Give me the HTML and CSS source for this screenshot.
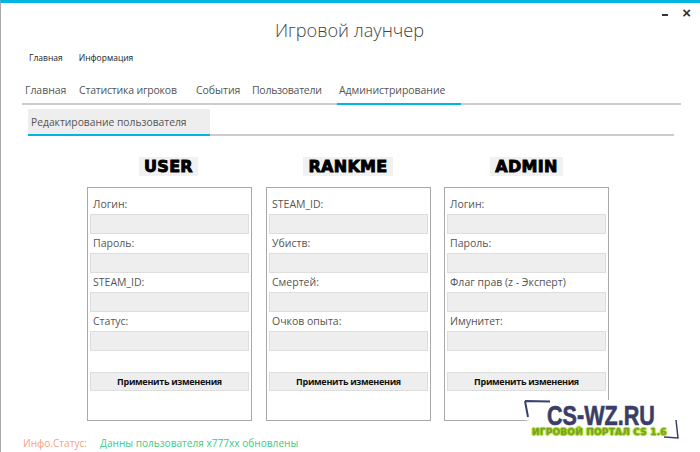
FILE: index.html
```html
<!DOCTYPE html>
<html lang="ru">
<head>
<meta charset="utf-8">
<title>Игровой лаунчер</title>
<link rel="stylesheet" href="styles.css">
</head>
<body>
<div class="window">
  <div class="winctl"><span class="min"></span><span class="close">×</span></div>
  <h1 class="title">Игровой лаунчер</h1>
  <nav class="menu"><span>Главная</span><span>Информация</span></nav>
  <div class="tabs">
    <span class="tab t1">Главная</span>
    <span class="tab t2">Статистика игроков</span>
    <span class="tab t3">События</span>
    <span class="tab t4">Пользователи</span>
    <span class="tab t5 active">Администрирование</span>
  </div>
  <div class="subtabs"><span class="subtab">Редактирование пользователя</span></div>
  <main class="cols">
    <section class="col c1">
      <h2 class="head"><span>USER</span></h2>
      <div class="panel">
        <label>Логин:</label><div class="field"></div>
        <label>Пароль:</label><div class="field"></div>
        <label>STEAM_ID:</label><div class="field"></div>
        <label>Статус:</label><div class="field"></div>
        <div class="btn">Применить изменения</div>
      </div>
    </section>
    <section class="col c2">
      <h2 class="head"><span>RANKME</span></h2>
      <div class="panel">
        <label>STEAM_ID:</label><div class="field"></div>
        <label>Убиств:</label><div class="field"></div>
        <label>Смертей:</label><div class="field"></div>
        <label>Очков опыта:</label><div class="field"></div>
        <div class="btn">Применить изменения</div>
      </div>
    </section>
    <section class="col c3">
      <h2 class="head"><span>ADMIN</span></h2>
      <div class="panel">
        <label>Логин:</label><div class="field"></div>
        <label>Пароль:</label><div class="field"></div>
        <label>Флаг прав (z - Эксперт)</label><div class="field"></div>
        <label>Имунитет:</label><div class="field"></div>
        <div class="btn">Применить изменения</div>
      </div>
    </section>
  </main>
  <footer class="status"><span class="s1">Инфо.Статус:</span><span class="s2">Данны пользователя x777xx обновлены</span></footer>
  <div class="mark">
    <svg class="frame" width="158" height="42" viewBox="0 0 158 42"><path d="M1 1 L26 1.5 M1 1 L4 17" stroke="#3b3f6b" stroke-width="2" fill="none"/><path d="M152 20 L154 38 L140 37" stroke="#3b3f6b" stroke-width="1.5" fill="none"/></svg>
    <div class="big">CS-WZ.RU</div>
    <div class="small">ИГРОВОЙ ПОРТАЛ CS 1.6</div>
  </div>
</div>
</body>
</html>
```
FILE: styles.css
```css
* { box-sizing: border-box; }
html, body { margin: 0; padding: 0; background: #fff; }
.window {
  position: relative;
  width: 700px;
  height: 452px;
  overflow: hidden;
  border-top: 3px solid #00b5e2;
  border-left: 1px solid #a8a8a8;
  font-family: "Open Sans", "Noto Sans", sans-serif;
  color: #555;
}
.winctl { position: absolute; top: 0; right: 0; }
.winctl .min { position: absolute; top: 11px; right: 32px; width: 6px; height: 2px; background: #333; }
.winctl .close { position: absolute; top: 0; right: 9px; font: 700 15px/20px "Liberation Sans", sans-serif; color: #333; }
.title {
  margin: 0;
  padding-top: 14px;
  padding-right: 2px;
  height: 45px;
  text-align: center;
  font-size: 18.2px;
  line-height: 27px;
  font-weight: 300;
  color: #444;
}
.menu { display: flex; gap: 16px; padding-left: 28px; height: 35px; padding-top: 4px; font-size: 8.5px; line-height: 12px; color: #222; }
.tabs {
  display: flex;
  margin-left: 21px;
  width: 659px;
  height: 22px;
  border-bottom: 2px solid #ccc;
  font-size: 10.5px;
  line-height: 15px;
  letter-spacing: -.05px;
}
.tab { height: 22px; white-space: nowrap; }
.t1 { width: 54px; padding-left: 3px; }
.t2 { width: 120px; padding-left: 3px; letter-spacing: -.2px; }
.t3 { width: 56px; }
.t4 { width: 85px; letter-spacing: -.28px; }
.t5 { width: 124px; padding-left: 2px; }
.tab.active { border-bottom: 2px solid #00b5e2; }
.subtabs {
  margin: 4px 0 0 27px;
  width: 646px;
  height: 27px;
  border-bottom: 2px solid #ccc;
  display: flex;
}
.subtab {
  width: 182px;
  height: 27px;
  background: #eee;
  border-bottom: 2px solid #00b5e2;
  padding-left: 3px;
  font-size: 10.3px;
  line-height: 27px;
  white-space: nowrap;
}
.cols { display: flex; margin: 21px 0 0 86px; }
.col { width: 165px; }
.c1 { margin-right: 14px; }
.c2 { margin-right: 13px; }
.head { margin: 0; height: 30px; text-align: center; font-family: "DejaVu Sans", sans-serif; font-size: 16px; line-height: 19px; font-weight: 700; color: #000; }
.head span { display: inline-block; background: #f1f1f1; padding: 0 5px; -webkit-text-stroke: .9px #000; letter-spacing: .3px; }
.c1 .head { padding-right: 2px; }
.c2 .head { padding-right: 1px; }
.panel {
  height: 234px;
  border: 1px solid #a8a8a8;
  padding: 7px 2px 0;
}
.panel label { display: block; height: 19px; padding-left: 3px; font-size: 10.5px; line-height: 18px; white-space: nowrap; }
.field { height: 20px; background: #eee; border: 1px solid #ddd; }
.btn {
  margin-top: 21px;
  height: 19px;
  background: #eee;
  border: 1px solid #ddd;
  text-align: center;
  font-size: 9px;
  font-weight: 700;
  letter-spacing: -.3px;
  line-height: 17px;
  color: #111;
  white-space: nowrap;
}
.status { display: flex; margin-top: 15px; padding-left: 22px; font-size: 10.1px; line-height: 14px; white-space: nowrap; }
.s1 { color: #f8a17e; width: 77px; }
.s2 { color: #3ccb8a; }
.mark { position: absolute; left: 523px; top: 397px; width: 158px; height: 42px; background: linear-gradient(90deg, #fff0, #fff 6px); }
.frame { position: absolute; left: 0; top: 0; }
.big { position: absolute; left: 23px; top: 5px; font: 700 28px/22px "Liberation Sans", sans-serif; color: #3a3d66; white-space: nowrap; transform: scaleX(.77); transform-origin: left top; -webkit-text-stroke: .6px #3a3d66; }
.small { position: absolute; left: 8px; top: 27px; font: 700 9px/11px "DejaVu Sans", sans-serif; color: #7f9a3a; white-space: nowrap; letter-spacing: .2px; text-shadow: 0 0 1px #a0e010, 0 0 1px #a0e010, 1px 0 1px #a0e010, -1px 0 1px #a0e010, 0 1px 1px #a0e010, 0 -1px 1px #a0e010; }
```
